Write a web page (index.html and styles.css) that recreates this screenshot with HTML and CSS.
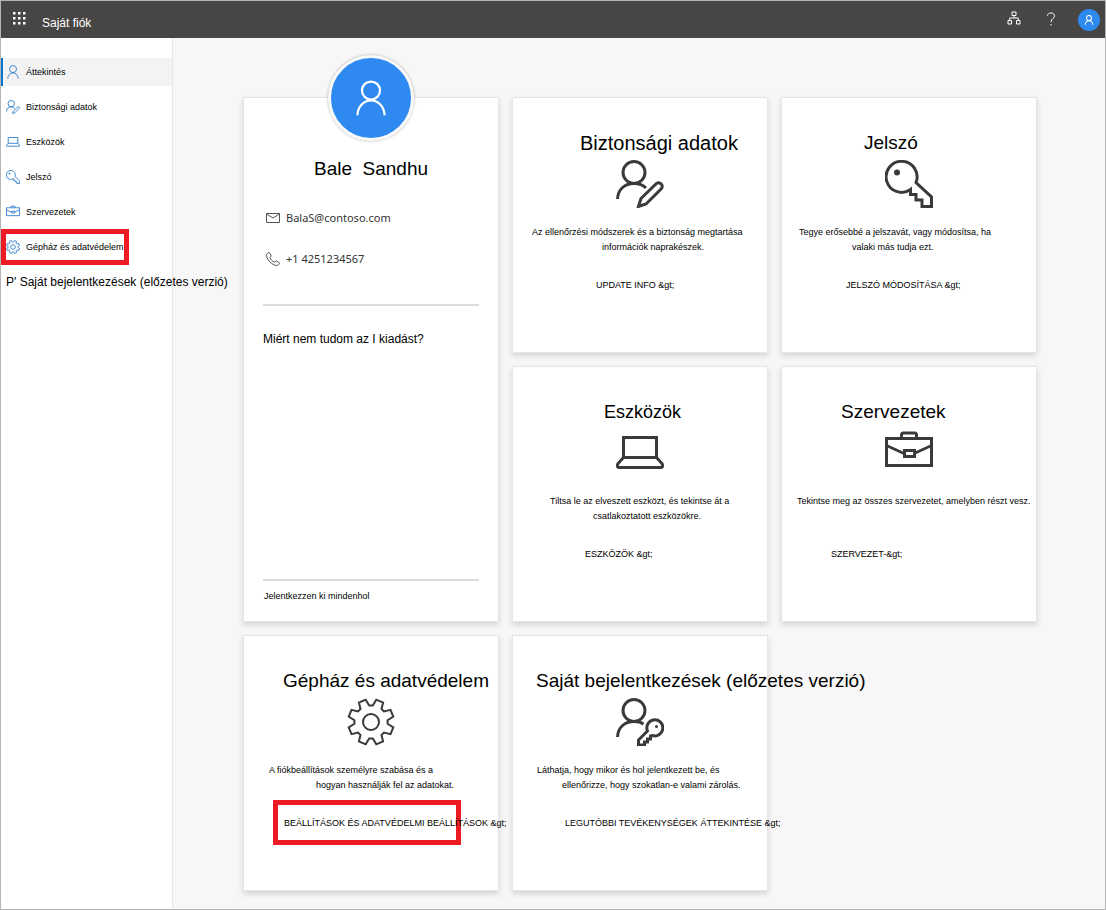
FILE: index.html
```html
<!DOCTYPE html>
<html lang="hu">
<head>
<meta charset="utf-8">
<title>Saját fiók</title>
<link rel="stylesheet" href="styles.css">
</head>
<body>
<svg class="sprite" aria-hidden="true">
  <symbol id="i-person" viewBox="0 0 48 48"><circle cx="24" cy="14" r="12"/><path d="M6 47a18 20 0 0 1 36 0"/></symbol>
  <symbol id="i-person-edit" viewBox="0 0 48 48"><circle cx="18" cy="12.500" r="11"/><path d="M1.500 39C2 29 9 23.500 18 23.500c5 0 9 1.500 12 4.500M22.500 46.500l2.500-8L40.500 23.500a3.600 3.600 0 0 1 5 5L30 44z"/></symbol>
  <symbol id="i-person-key" viewBox="0 0 48 48"><circle cx="18" cy="12.500" r="11"/><path d="M1.500 39C2 29 9 23.500 18 23.500c4 0 7 .8 9.500 2.500"/><path d="M31.500 33a8 8 0 1 1 5 4.500l-2 .5v3h-3v3h-3v3h-6v-5z"/><circle class="dot" cx="40.500" cy="28.500" r="1.500"/></symbol>
  <symbol id="i-laptop" viewBox="0 0 48 48"><path d="M7.500 8.500h33v20h-33zM7.500 28.500l-5.500 6c-1 2-1 4 1 4h42c2 0 2-2 1-4l-5.500-6"/></symbol>
  <symbol id="i-key" viewBox="0 0 48 48"><path d="M25.500 29.500a15.500 15.500 0 1 1 5.500-7L46.500 37v9.500h-9.500V40h-6v-5.500h-5.500z"/><circle class="dot" cx="12" cy="12.500" r="3"/></symbol>
  <symbol id="i-case" viewBox="0 0 48 48"><path d="M1.500 9.500h45v27h-45zM16.500 9.500V6q0-2 2-2h11q2 0 2 2v3.500M1.500 16.500l17.500 8M46.500 16.500l-17.500 8M19.500 21.500h10v6h-10z"/></symbol>
  <symbol id="i-gear" viewBox="0 0 48 48"><circle cx="24" cy="24" r="8"/><path d="M18.700 1.700 22.200 7.400h3.600L29.300 1.700 36.100 4.500 34.500 11 37 13.500 43.500 11.900 46.300 18.700 40.600 22.200v3.600L46.300 29.300 43.500 36.100 37 34.500 34.500 37 36.100 43.500 29.300 46.300 25.800 40.600h-3.600L18.700 46.300 11.900 43.500 13.500 37 11 34.500 4.500 36.100 1.700 29.300 7.400 25.800v-3.600L1.700 18.700 4.500 11.900 11 13.500 13.500 11 11.900 4.500z"/></symbol>
</svg>
<div class="app">
  <header class="topbar">
    <button class="icon-btn" aria-label="Alkalmazásindító"><svg class="waffle" viewBox="0 0 13 13"><path d="M0 0h2.500v2.500H0zM5 0h2.500v2.500H5zM10 0h2.500v2.500H10zM0 5h2.500v2.500H0zM5 5h2.500v2.500H5zM10 5h2.500v2.500H10zM0 10h2.500v2.500H0zM5 10h2.500v2.500H5zM10 10h2.500v2.500H10z"/></svg></button>
    <span class="topbar-title">Saját fiók</span>
    <div class="topbar-actions">
      <button class="icon-btn" aria-label="Szervezet"><svg class="org" viewBox="0 0 14 14"><path d="M5 1h4v3.500H5zM1 9.500h3.500V13H1zM9.500 9.500H13V13H9.500zM7 4.500V7M2.700 9.500V7h8.600v2.500"/></svg></button>
      <button class="icon-btn" aria-label="Súgó"><svg class="help" viewBox="0 0 10 14"><path d="M1.500 3.700C1.500 2 3 1 5 1s3.500 1 3.500 3C8.500 6.500 5 6.500 5 10"/><path d="M5 12v1.500"/></svg></button>
      <button class="user-btn" aria-label="Fiók"><svg class="icon" viewBox="0 0 48 48"><use href="#i-person"/></svg></button>
    </div>
  </header>
  <div class="body">
    <nav class="sidebar">
      <ul class="nav">
        <li><a class="nav-link active" href="#"><svg class="icon"><use href="#i-person"/></svg>Áttekintés</a></li>
        <li><a class="nav-link" href="#"><svg class="icon"><use href="#i-person-edit"/></svg>Biztonsági adatok</a></li>
        <li><a class="nav-link" href="#"><svg class="icon"><use href="#i-laptop"/></svg>Eszközök</a></li>
        <li><a class="nav-link" href="#"><svg class="icon"><use href="#i-key"/></svg>Jelszó</a></li>
        <li><a class="nav-link" href="#"><svg class="icon"><use href="#i-case"/></svg>Szervezetek</a></li>
        <li><a class="nav-link marked" href="#"><svg class="icon"><use href="#i-gear"/></svg>Gépház és adatvédelem</a></li>
        <li><a class="nav-link large" href="#">P' Saját bejelentkezések (előzetes verzió)</a></li>
      </ul>
    </nav>
    <main class="main">
      <section class="card profile">
        <div class="avatar"><svg class="icon"><use href="#i-person"/></svg></div>
        <h1 class="name">Bale&nbsp; Sandhu</h1>
        <p class="contact email"><svg viewBox="0 0 14 14"><path d="M.5 2.500h13v9H.5zM.5 3l6.500 4 6.500-4"/></svg>BalaS@contoso.com</p>
        <p class="contact phone"><svg viewBox="0 0 14 14"><path d="M3.500.7 5.300 4 4 5.500c.5 2 2.500 4 4.500 4.600L10 8.800l3.300 1.900c.3 1.300-1 2.800-2.600 2.800C6 13 1 8 .5 3.500.4 2 2 .5 3.500.7z"/></svg>+1 4251234567</p>
        <div class="profile-question"><a href="#">Miért nem tudom az I kiadást?</a></div>
        <div class="profile-footer"><a href="#">Jelentkezzen ki mindenhol</a></div>
      </section>
      <section class="card tile security">
        <h2 class="title">Biztonsági adatok</h2>
        <svg class="icon"><use href="#i-person-edit"/></svg>
        <p class="text"><span class="first">Az ellenőrzési módszerek és a biztonság megtartása</span> <span class="second">információk naprakészek.</span></p>
        <a class="action" href="#">UPDATE INFO &amp;gt;</a>
      </section>
      <section class="card tile password">
        <h2 class="title">Jelszó</h2>
        <svg class="icon"><use href="#i-key"/></svg>
        <p class="text"><span class="first">Tegye erősebbé a jelszavát, vagy módosítsa, ha</span> <span class="second">valaki más tudja ezt.</span></p>
        <a class="action" href="#">JELSZÓ MÓDOSÍTÁSA &amp;gt;</a>
      </section>
      <section class="card tile devices">
        <h2 class="title">Eszközök</h2>
        <svg class="icon"><use href="#i-laptop"/></svg>
        <p class="text"><span class="first">Tiltsa le az elveszett eszközt, és tekintse át a</span> <span class="second">csatlakoztatott eszközökre.</span></p>
        <a class="action" href="#">ESZKÖZÖK &amp;gt;</a>
      </section>
      <section class="card tile organizations">
        <h2 class="title">Szervezetek</h2>
        <svg class="icon"><use href="#i-case"/></svg>
        <p class="text"><span class="first">Tekintse meg az összes szervezetet, amelyben részt vesz.</span></p>
        <a class="action" href="#">SZERVEZET-&amp;gt;</a>
      </section>
      <section class="card tile settings">
        <h2 class="title">Gépház és adatvédelem</h2>
        <svg class="icon"><use href="#i-gear"/></svg>
        <p class="text"><span class="first">A fiókbeállítások személyre szabása és a</span> <span class="second">hogyan használják fel az adatokat.</span></p>
        <a class="action marked" href="#">BEÁLLÍTÁSOK ÉS ADATVÉDELMI BEÁLLÍTÁSOK &amp;gt;</a>
      </section>
      <section class="card tile signins">
        <h2 class="title">Saját bejelentkezések (előzetes verzió)</h2>
        <svg class="icon"><use href="#i-person-key"/></svg>
        <p class="text"><span class="first">Láthatja, hogy mikor és hol jelentkezett be, és</span> <span class="second">ellenőrizze, hogy szokatlan-e valami zárolás.</span></p>
        <a class="action" href="#">LEGUTÓBBI TEVÉKENYSÉGEK ÁTTEKINTÉSE &amp;gt;</a>
      </section>
    </main>
  </div>
</div>
</body>
</html>
```
FILE: styles.css
```css
*, *::before, *::after { box-sizing: border-box; }

body {
  margin: 0;
  font-family: "Liberation Sans", Arial, sans-serif;
  font-size: 9px;
  color: #000;
}

h1, h2, p, ul { margin: 0; padding: 0; font-weight: 400; }
a { color: inherit; text-decoration: none; }
button { padding: 0; border: 0; background: none; color: inherit; }
svg { display: block; flex: none; fill: none; stroke: currentColor; }
.sprite { position: absolute; width: 0; height: 0; }
.dot { fill: currentColor; stroke: none; }

.app {
  display: flex;
  flex-direction: column;
  min-height: 100vh;
  border: 1px solid #b5b5b5;
  background: #f7f7f7;
}

/* Top bar */
.topbar {
  display: flex;
  align-items: center;
  height: 37px;
  padding: 0 5px 0 12px;
  background: #484644;
  color: #fff;
}
.topbar-title { margin-left: 16px; padding-top: 7px; font-size: 12px; line-height: 14px; }
.topbar-actions { display: flex; align-items: center; gap: 22px; margin-left: auto; }
.waffle { width: 13px; height: 13px; margin-bottom: 2px; fill: #fff; stroke: none; }
.org { width: 14px; height: 14px; margin: 0 3px 3px 0; }
.help { width: 10px; height: 14px; margin-bottom: 2px; }
.user-btn {
  display: grid;
  place-items: center;
  width: 22px;
  height: 22px;
  border-radius: 50%;
  background: #2e8af0;
}
.user-btn .icon { width: 10px; height: 10px; stroke-width: 5; }

/* Sidebar */
.body { display: flex; flex: 1; }
.sidebar {
  position: relative;
  z-index: 1;
  flex: none;
  width: 172px;
  padding-top: 20px;
  border-right: 1px solid #e6e6e6;
  background: #fff;
}
.nav { display: flex; flex-direction: column; gap: 7px; list-style: none; }
.nav-link {
  position: relative;
  display: flex;
  align-items: center;
  gap: 6px;
  height: 28px;
  padding-left: 5px;
  white-space: nowrap;
}
.nav-link .icon { width: 14px; height: 14px; color: #2b7cc9; stroke-width: 3; }
.nav-link.active { background: #f3f3f3; box-shadow: inset 2px 0 #0078d4; }
.nav-link.large { font-size: 12px; }
.nav-link.marked::after {
  content: "";
  position: absolute;
  top: -4px;
  bottom: -4px;
  left: 0;
  width: 128px;
  border: 5px solid #ed1c24;
}

/* Cards */
.main {
  display: grid;
  flex: 1;
  grid-template-columns: repeat(3, minmax(0, 256px));
  grid-auto-rows: minmax(256px, auto);
  gap: 13px;
  align-content: start;
  justify-content: center;
  min-width: 0;
  padding: 59px 16px 16px 18px;
}
.card {
  border: 1px solid #e6e6e6;
  background: #fff;
  box-shadow: 0 3px 6px rgba(0, 0, 0, 0.14);
}

.tile {
  position: relative;
  display: flex;
  flex-direction: column;
  align-items: flex-start;
  padding-top: 33px;
  white-space: nowrap;
}
.title { margin-left: var(--title); font-size: 19px; line-height: 24px; }
.tile .icon { align-self: center; width: 48px; height: 48px; margin-top: 5px; color: #3b3a39; stroke-width: 3; }
.text { min-height: 30px; margin-top: 17px; line-height: 15px; }
.text span { display: block; }
.first { margin-left: var(--first); }
.second { margin-left: var(--second); }
.action { margin: 23px 0 0 var(--action); line-height: 15px; }
.action.marked { position: relative; isolation: isolate; }
.action.marked::before {
  content: "";
  position: absolute;
  z-index: -1;
  top: -16px;
  left: -11px;
  width: 188px;
  height: 45px;
  border: 5px solid #ed1c24;
}

.security { --title: 67px; --first: 19px; --second: 89px; --action: 83px; }
.password { --title: 82px; --first: 17px; --second: 70px; --action: 64px; }
.devices { --title: 91px; --first: 37px; --second: 80px; --action: 72px; }
.organizations { --title: 59px; --first: 15px; --action: 49px; }
.settings { --title: 39px; --first: 25px; --second: 72px; --action: 40px; }
.signins { z-index: 0; --title: 23px; --first: 24px; --second: 49px; --action: 52px; }
.settings { z-index: 1; }
.settings .icon { stroke-width: 2; }
.security .title { font-size: 20px; }
.devices .title { font-size: 18px; }

/* Profile */
.profile { display: flex; flex-direction: column; grid-row: span 2; padding: 0 19px; }
.avatar {
  display: grid;
  place-items: center;
  align-self: center;
  width: 86px;
  height: 86px;
  margin-top: -43px;
  border: 3px solid #f9f9f9;
  border-radius: 50%;
  background: #2e8af0;
  box-shadow: 0 0 3px rgba(0, 0, 0, 0.3);
  color: #fff;
}
.avatar .icon { width: 36px; height: 36px; stroke-width: 3; }
.name { margin-top: 16px; font-size: 19px; line-height: 24px; text-align: center; }
.contact {
  display: flex;
  align-items: center;
  gap: 6px;
  padding-left: 3px;
  font-family: "Noto Sans", sans-serif;
  font-size: 11px;
  line-height: 16px;
  color: #333;
}
.contact svg { width: 14px; height: 14px; color: #555; }
.email { margin-top: 29px; }
.phone { margin-top: 25px; }
.profile-question {
  margin-top: 37px;
  padding-top: 25px;
  border-top: 2px solid #dcdcdc;
  font-size: 12px;
  line-height: 16px;
}
.profile-footer {
  margin-top: auto;
  padding: 8px 0 17px 1px;
  border-top: 2px solid #dcdcdc;
  line-height: 15px;
}
```
